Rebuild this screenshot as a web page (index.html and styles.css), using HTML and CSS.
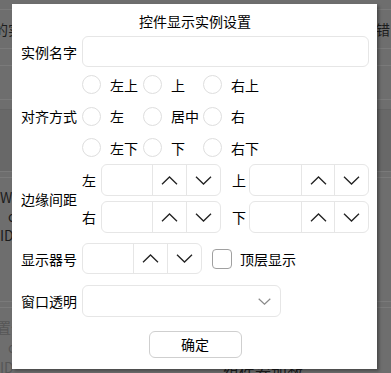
FILE: index.html
```html
<!DOCTYPE html>
<html lang="zh">
<head>
<meta charset="utf-8">
<title>控件显示实例设置</title>
<link rel="stylesheet" href="styles.css">
</head>
<body>
<div class="app">
  <div class="app-row r1"></div>
  <div class="app-row r2"><span class="bg-text left-cut">的实例</span><span class="bg-text">错</span></div>
  <div class="app-row r3"></div>
  <div class="app-row r4"></div>
  <div class="app-row r5"></div>
  <div class="app-row r6"></div>
  <div class="app-row r7"></div>
  <div class="app-row r8">
    <div class="bg-col">
      <span class="bg-text">We</span>
      <span class="bg-text indent">c</span>
      <span class="bg-text">ID</span>
    </div>
  </div>
  <div class="app-row r9"></div>
  <div class="app-row r10">
    <div class="bg-col lower">
      <span class="bg-text muted left-cut2">置位</span>
      <span class="bg-text muted indent">c</span>
      <span class="bg-text muted">ID</span>
    </div>
    <span class="bg-text big">组件参加数</span>
  </div>
</div>

<div class="dialog">
  <div class="title">控件显示实例设置</div>

  <div class="row">
    <div class="label">实例名字</div>
    <div class="input name-input"></div>
  </div>

  <div class="row align">
    <div class="label">对齐方式</div>
    <div class="radios">
      <div class="radio"><span class="circle"></span><span>左上</span></div>
      <div class="radio"><span class="circle"></span><span>上</span></div>
      <div class="radio"><span class="circle"></span><span>右上</span></div>
      <div class="radio"><span class="circle"></span><span>左</span></div>
      <div class="radio"><span class="circle"></span><span>居中</span></div>
      <div class="radio"><span class="circle"></span><span>右</span></div>
      <div class="radio"><span class="circle"></span><span>左下</span></div>
      <div class="radio"><span class="circle"></span><span>下</span></div>
      <div class="radio"><span class="circle"></span><span>右下</span></div>
    </div>
  </div>

  <div class="row margins">
    <div class="label">边缘间距</div>
    <div class="spin-grid">
      <div class="spin-cell">
        <span class="sub-label l1">左</span>
        <div class="spin">
          <div class="spin-field"></div>
          <div class="spin-btn"><svg width="17" height="9" viewBox="0 0 17 9"><path d="M1 8.2 L8.5 1 L16 8.2" /></svg></div>
          <div class="spin-btn last"><svg width="17" height="9" viewBox="0 0 17 9"><path d="M1 0.8 L8.5 8 L16 0.8" /></svg></div>
        </div>
      </div>
      <div class="spin-cell">
        <span class="sub-label l2">上</span>
        <div class="spin">
          <div class="spin-field"></div>
          <div class="spin-btn narrow"><svg width="17" height="9" viewBox="0 0 17 9"><path d="M1 8.2 L8.5 1 L16 8.2" /></svg></div>
          <div class="spin-btn last"><svg width="17" height="9" viewBox="0 0 17 9"><path d="M1 0.8 L8.5 8 L16 0.8" /></svg></div>
        </div>
      </div>
      <div class="spin-cell">
        <span class="sub-label l1">右</span>
        <div class="spin">
          <div class="spin-field"></div>
          <div class="spin-btn"><svg width="17" height="9" viewBox="0 0 17 9"><path d="M1 8.2 L8.5 1 L16 8.2" /></svg></div>
          <div class="spin-btn last"><svg width="17" height="9" viewBox="0 0 17 9"><path d="M1 0.8 L8.5 8 L16 0.8" /></svg></div>
        </div>
      </div>
      <div class="spin-cell">
        <span class="sub-label l2">下</span>
        <div class="spin">
          <div class="spin-field"></div>
          <div class="spin-btn narrow"><svg width="17" height="9" viewBox="0 0 17 9"><path d="M1 8.2 L8.5 1 L16 8.2" /></svg></div>
          <div class="spin-btn last"><svg width="17" height="9" viewBox="0 0 17 9"><path d="M1 0.8 L8.5 8 L16 0.8" /></svg></div>
        </div>
      </div>
    </div>
  </div>

  <div class="row monitor">
    <div class="label">显示器号</div>
    <div class="spin short">
      <div class="spin-field"></div>
      <div class="spin-btn"><svg width="17" height="9" viewBox="0 0 17 9"><path d="M1 8.2 L8.5 1 L16 8.2" /></svg></div>
      <div class="spin-btn last"><svg width="17" height="9" viewBox="0 0 17 9"><path d="M1 0.8 L8.5 8 L16 0.8" /></svg></div>
    </div>
    <span class="checkbox"></span>
    <span class="check-label">顶层显示</span>
  </div>

  <div class="row transparency">
    <div class="label">窗口透明</div>
    <div class="combo">
      <svg class="combo-arrow" width="13" height="7" viewBox="0 0 13 7"><path d="M0.7 0.7 L6.5 6.2 L12.3 0.7" /></svg>
    </div>
  </div>

  <button class="ok-btn" type="button">确定</button>
</div>
</body>
</html>
```

FILE: styles.css
```css
html, body {
  margin: 0;
  padding: 0;
}

body {
  width: 391px;
  height: 373px;
  overflow: hidden;
  position: relative;
  background: #6e6e6e;
  font-family: "Noto Sans CJK SC", "Liberation Sans", sans-serif;
}

/* dimmed application behind the modal */
.app {
  display: flex;
  flex-direction: column;
  width: 391px;
  height: 373px;
  overflow: hidden;
}

.app-row {
  display: flex;
  justify-content: space-between;
  align-items: center;
  box-sizing: border-box;
  border-bottom: 1px solid #7a7a7a;
  flex: none;
}

.r1 { height: 10px; }
.r2 { height: 39px; padding-right: 1px; }
.r3 { height: 17px; }
.r4 { height: 34px; }
.r5 { height: 10px; border-bottom-color: #646464; }
.r6 { height: 62px; background: #686868; border-bottom-color: #7a7a7a; }
.r7 { height: 6px; }
.r8 { height: 124px; align-items: flex-start; justify-content: flex-start; }
.r9 { height: 6px; }
.r10 { flex: 1; align-items: flex-start; justify-content: flex-start; border-bottom: none; }

.bg-text {
  font-size: 14px;
  line-height: 19px;
  color: #1c1c1c;
  white-space: nowrap;
}

.left-cut { margin-left: -6px; }
.left-cut2 { margin-left: -3px; }

.bg-col {
  display: flex;
  flex-direction: column;
  padding-top: 10px;
  width: 20px;
  flex: none;
}

.bg-col.lower {
  padding-top: 9px;
}

.bg-col.lower .bg-text {
  line-height: 20px;
}

.indent { margin-left: 8px; }

.muted { color: #565656; }

.big {
  font-size: 16px;
  line-height: 16px;
  margin-left: 203px;
  margin-top: 56px;
}

/* dialog */
.dialog {
  position: absolute;
  left: 12px;
  top: 4px;
  width: 365px;
  height: 365px;
  box-sizing: border-box;
  padding: 0 8px 0 9px;
  background: #ffffff;
  box-shadow: 2px 2px 3px rgba(0, 0, 0, 0.35);
  display: flex;
  flex-direction: column;
  font-size: 14px;
  color: #000;
  z-index: 2;
}

.title {
  height: 32px;
  line-height: 34px;
  text-align: center;
  flex: none;
}

.row {
  display: flex;
  align-items: center;
  flex: none;
}

.label {
  width: 61px;
  flex: none;
  line-height: 20px;
}

.input {
  box-sizing: border-box;
  border: 1px solid #e6e6e6;
  border-radius: 6px;
  background: #fff;
}

.name-input {
  flex: 1;
  height: 31px;
}

.align {
  margin-top: 2px;
}

.radios {
  display: grid;
  grid-template-columns: 61px 60px auto;
  grid-auto-rows: 31.5px;
  align-items: center;
}

.radio {
  display: flex;
  align-items: center;
  gap: 9px;
  line-height: 20px;
}

.circle {
  width: 19px;
  height: 19px;
  box-sizing: border-box;
  border: 1px solid #dedede;
  border-radius: 50%;
  flex: none;
}

.margins {
  margin-top: 0.5px;
}

.spin-grid {
  display: grid;
  grid-template-columns: 139px 137px;
  column-gap: 11px;
  row-gap: 5px;
}

.spin-cell {
  display: flex;
  align-items: center;
}

.sub-label {
  flex: none;
  line-height: 20px;
}

.sub-label.l1 { width: 19px; }
.sub-label.l2 { width: 17px; }

.spin {
  flex: 1;
  display: flex;
  height: 32px;
  box-sizing: border-box;
  border: 1px solid #e6e6e6;
  border-radius: 6px;
}

.spin-field {
  flex: 1;
}

.spin-btn {
  width: 34px;
  box-sizing: border-box;
  border-left: 1px solid #e6e6e6;
  display: flex;
  align-items: center;
  justify-content: center;
  flex: none;
}

.spin-btn.narrow { width: 33px; }
.spin-btn.last { width: 34px; }

.spin-btn svg path {
  fill: none;
  stroke: #222;
  stroke-width: 1.3;
}

.monitor {
  margin-top: 10px;
}

.spin.short {
  flex: none;
  width: 120px;
  height: 31px;
}

.checkbox {
  width: 20px;
  height: 20px;
  box-sizing: border-box;
  border: 1.5px solid #a0a0a0;
  border-radius: 4px;
  margin-left: 10px;
  flex: none;
}

.check-label {
  margin-left: 8px;
  line-height: 20px;
}

.transparency {
  margin-top: 11px;
}

.combo {
  width: 199px;
  height: 32px;
  box-sizing: border-box;
  border: 1px solid #e6e6e6;
  border-radius: 6px;
  display: flex;
  align-items: center;
  justify-content: flex-end;
  padding-right: 9px;
}

.combo-arrow path {
  fill: none;
  stroke: #8a8a8a;
  stroke-width: 1.2;
}

.ok-btn {
  align-self: center;
  margin-top: 14px;
  width: 93px;
  height: 27px;
  box-sizing: border-box;
  border: 1px solid #cfcfcf;
  border-radius: 6px;
  background: #fff;
  font-family: "Noto Sans CJK SC", sans-serif;
  font-size: 14px;
  color: #000;
  padding: 0;
  line-height: 25px;
}
```
